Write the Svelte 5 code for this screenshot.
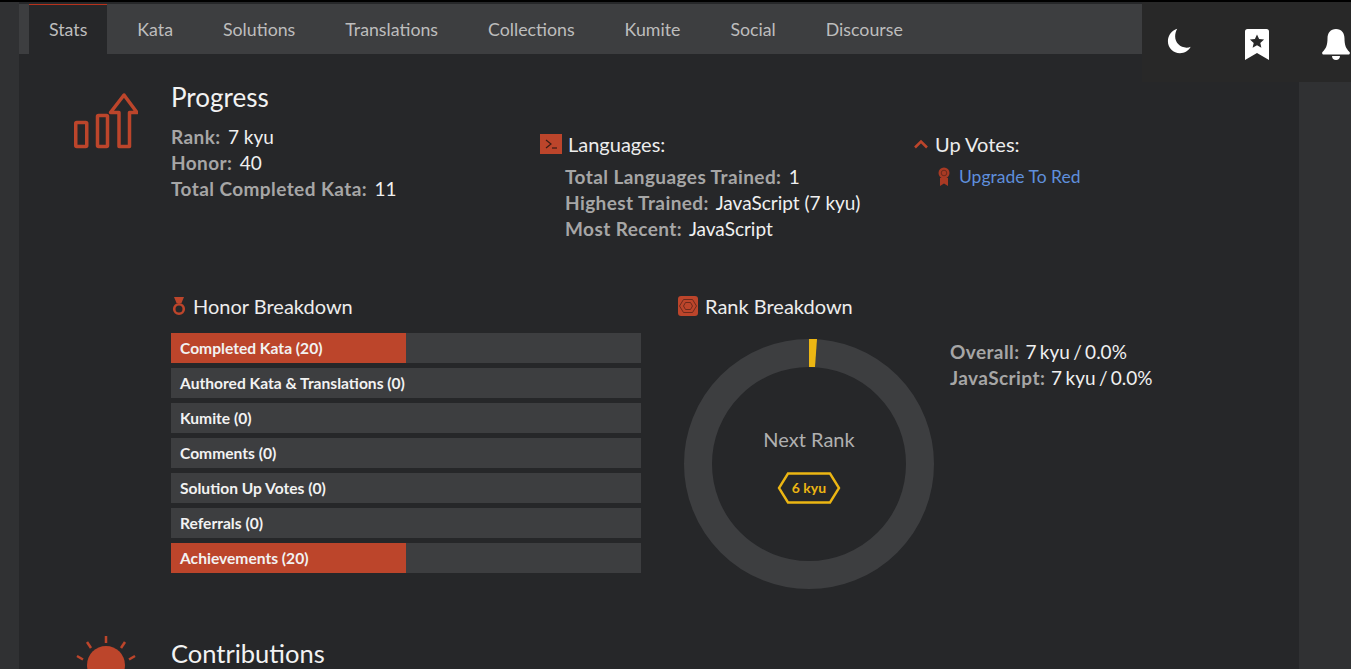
<script>
  const tabs = ["Stats", "Kata", "Solutions", "Translations", "Collections", "Kumite", "Social", "Discourse"];
  const bars = [
    { label: "Completed Kata (20)", pct: 50 },
    { label: "Authored Kata & Translations (0)", pct: 0 },
    { label: "Kumite (0)", pct: 0 },
    { label: "Comments (0)", pct: 0 },
    { label: "Solution Up Votes (0)", pct: 0 },
    { label: "Referrals (0)", pct: 0 },
    { label: "Achievements (20)", pct: 50 }
  ];
</script>

<div class="page">
  <div class="rail"></div>
  <div class="shell">
    <header class="top">
      <div class="top-left">
        <nav class="tabs">
          {#each tabs as tab, i}
            <a class="tab" class:active={i === 0} href="#{tab}">{tab}</a>
          {/each}
        </nav>
      </div>
      <div class="actions">
        <svg class="moon" viewBox="0 0 24 24" width="28" height="28">
          <path d="M10.500 1.500C6 3 2.500 7 2.500 12.200c0 5.800 4.700 10.300 10.300 10.300 4 0 7.400-2.100 9.200-5.500-1 .5-2.200.7-3.500.7-5.500 0-9.800-4.200-9.800-9.500 0-2.500.6-4.700 1.800-6.700z" fill="#fff" />
        </svg>
        <svg class="bookmark" viewBox="0 0 24 32" width="24" height="32">
          <path d="M2.500 0h19A2.500 2.500 0 0 1 24 2.500V31l-12-7-12 7V2.500A2.500 2.500 0 0 1 2.500 0z" fill="#fff" />
          <path d="M12 5.500l2.100 4.600 5 .5-3.800 3.300 1.100 4.900-4.400-2.600-4.400 2.600 1.100-4.900-3.800-3.300 5-.5z" fill="#282828" />
        </svg>
        <svg class="bell" viewBox="0 0 28 32" width="28" height="32">
          <path d="M14 0c5.500 0 8.500 4 8.500 9.500 0 6.500 1.500 10 5 13.500.8.800.3 2.500-1 2.500H1.500c-1.300 0-1.800-1.700-1-2.500 3.500-3.500 5-7 5-13.500C5.500 4 8.500 0 14 0z" fill="#fff" />
          <path d="M10 27h8c0 2.500-1.700 4-4 4s-4-1.500-4-4z" fill="#fff" />
        </svg>
      </div>
    </header>

    <div class="body">
      <main class="main">
        <section class="progress">
          <svg class="big-icon" viewBox="0 0 65 58" width="65" height="58">
            <g fill="none" stroke="#bc452b" stroke-width="3.500" stroke-linejoin="round">
              <rect x="2.750" y="30.500" width="11" height="24" rx="1" />
              <rect x="24.500" y="23.500" width="10" height="31" rx="1" />
              <path d="M46 54.500V20.500h-8.500L51 3l13 17.500h-7.500V54.500z" />
            </g>
          </svg>
          <div class="progress-cols">
            <div class="col-rank">
              <h2>Progress</h2>
              <div class="stat"><b>Rank:</b> 7 kyu</div>
              <div class="stat"><b>Honor:</b> 40</div>
              <div class="stat"><b>Total Completed Kata:</b> 11</div>
            </div>
            <div class="col-lang">
              <h3>
                <svg viewBox="0 0 22 20" width="22" height="20">
                  <rect width="22" height="20" fill="#bc452b" />
                  <path d="M6 6l5 4-5 4" fill="none" stroke="#3a1c14" stroke-width="1.200" />
                  <path d="M12 14h5" stroke="#3a1c14" stroke-width="1.200" />
                </svg>
                Languages:
              </h3>
              <div class="indent">
                <div class="stat"><b>Total Languages Trained:</b> 1</div>
                <div class="stat"><b>Highest Trained:</b> JavaScript (7 kyu)</div>
                <div class="stat"><b>Most Recent:</b> JavaScript</div>
              </div>
            </div>
            <div class="col-votes">
              <h3>
                <svg viewBox="0 0 16 10" width="16" height="10">
                  <path d="M2 8.500l6-6 6 6" fill="none" stroke="#bc452b" stroke-width="2.500" />
                </svg>
                Up Votes:
              </h3>
              <div class="upgrade">
                <svg viewBox="0 0 12 19" width="12" height="19">
                  <circle cx="6" cy="6" r="5.500" fill="#a93a24" />
                  <circle cx="6" cy="6" r="2.800" fill="none" stroke="#6d2a1c" stroke-width="1" />
                  <path d="M2 11h8v8l-4-2.500L2 19z" fill="#a93a24" />
                </svg>
                <a href="#upgrade">Upgrade To Red</a>
              </div>
            </div>
          </div>
        </section>

        <section class="breakdown">
          <div class="honor">
            <h3 class="sub">
              <svg viewBox="0 0 14 20" width="14" height="20">
                <path d="M2 1h10L9.500 7h-5z" fill="#bc452b" />
                <circle cx="7" cy="13" r="4.800" fill="none" stroke="#bc452b" stroke-width="2.600" />
              </svg>
              Honor Breakdown
            </h3>
            <div class="bars">
              {#each bars as bar}
                <div class="bar">
                  <div class="fill" style="width: {bar.pct}%"></div>
                  <span>{bar.label}</span>
                </div>
              {/each}
            </div>
          </div>
          <div class="rank">
            <h3 class="sub">
              <svg viewBox="0 0 20 20" width="20" height="20">
                <rect width="20" height="20" rx="3" fill="#bc452b" />
                <path d="M5.500 3.500h9l4 6.500-4 6.500h-9L1.500 10z" fill="none" stroke="#6d2a1c" stroke-width="1" />
                <path d="M7.500 6.500h5l2 3.500-2 3.500h-5l-2-3.500z" fill="none" stroke="#6d2a1c" stroke-width="1" />
              </svg>
              Rank Breakdown
            </h3>
            <div class="rank-body">
              <div class="donut">
                <svg viewBox="0 0 250 250" width="250" height="250">
                  <circle cx="125" cy="125" r="111" fill="none" stroke="#3d3e40" stroke-width="28" />
                  <path d="M125 0h8l-2 28h-6z" fill="#ecb613" />
                </svg>
                <div class="next">
                  <div class="next-label">Next Rank</div>
                  <div class="kyu">
                    <svg viewBox="0 0 64 32" width="64" height="32">
                      <path d="M11 1.500h42L62 16l-9 14.500H11L2 16z" fill="none" stroke="#ecb613" stroke-width="2.400" />
                    </svg>
                    <span>6 kyu</span>
                  </div>
                </div>
              </div>
              <div class="rank-stats">
                <div class="stat"><b>Overall:</b> 7 kyu / 0.0%</div>
                <div class="stat"><b>JavaScript:</b> 7 kyu / 0.0%</div>
              </div>
            </div>
          </div>
        </section>

        <section class="contrib">
          <svg class="sun" viewBox="0 0 60 34" width="60" height="34">
            <circle cx="30" cy="30" r="19" fill="#bc452b" />
            <g stroke="#bc452b" stroke-width="2.500">
              <path d="M30 1v7" />
              <path d="M11 7l4 6" />
              <path d="M49 7l-4 6" />
              <path d="M1 21l6 3.500" />
              <path d="M59 21l-6 3.500" />
            </g>
          </svg>
          <h2>Contributions</h2>
        </section>
      </main>
      <aside class="side"></aside>
    </div>
  </div>
</div>

<style>
  :global(body) {
    margin: 0;
    background: #262729;
    overflow: hidden;
  }

  .page {
    display: flex;
    height: 667px;
    border-top: 2px solid #000;
    overflow: hidden;
    font-family: Lato, "Open Sans", sans-serif;
    font-size: 19px;
    color: #e6e6e6;
  }

  .rail {
    flex: 0 0 19px;
    background: #303133;
  }

  .shell {
    flex: 1;
    display: flex;
    flex-direction: column;
    min-width: 0;
  }

  .top {
    display: flex;
    flex: 0 0 80px;
    background: #282828;
  }

  .top-left {
    flex: 0 0 1123px;
    padding-top: 2px;
    background: #262729;
  }

  .tabs {
    display: flex;
    height: 50px;
    padding-left: 10px;
    background: #3d3e40;
  }

  .tab {
    display: flex;
    align-items: center;
    padding: 0 20px 2px;
    margin-right: 10px;
    border-top: 1px solid transparent;
    color: #bdbdbd;
    font-size: 17.750px;
    text-decoration: none;
  }

  .tab.active {
    border-top-color: #b8321c;
    background: #262729;
  }

  .actions {
    flex: 1;
    display: flex;
    padding: 27px 0 0 23px;
    align-items: flex-start;
    background: #282828;
  }

  .moon {
    flex-shrink: 0;
    margin-top: -2px;
  }

  .bookmark {
    flex-shrink: 0;
    margin-left: 52px;
  }

  .bell {
    flex-shrink: 0;
    margin-left: 53px;
  }

  .body {
    flex: 1;
    display: flex;
    min-height: 0;
  }

  .main {
    flex: 1;
    min-width: 0;
    background: #262729;
  }

  .side {
    flex: 0 0 52px;
    background: #303133;
  }

  h2 {
    margin: 0;
    font-size: 26px;
    font-weight: 400;
    line-height: 30px;
    color: #f2f2f2;
  }

  h3 {
    display: flex;
    align-items: center;
    gap: 6px;
    margin: 0;
    font-size: 20px;
    font-weight: 400;
    line-height: 26px;
    color: #ededed;
  }

  .progress {
    display: flex;
    padding: 0 0 0 54px;
  }

  .big-icon {
    flex: 0 0 65px;
    margin-top: 10px;
  }

  .progress-cols {
    display: grid;
    grid-template-columns: 369px 373px 1fr;
    margin-left: 33px;
  }

  .col-rank h2 {
    margin-bottom: 12px;
  }

  .col-lang, .col-votes {
    padding-top: 49px;
  }

  .stat {
    line-height: 26px;
    color: #f0f0f0;
    white-space: nowrap;
  }

  .stat b {
    margin-right: 2.500px;
    font-weight: 700;
    letter-spacing: .42px;
    color: #a6a6a6;
  }

  .indent {
    margin: 7px 0 0 25px;
  }

  .upgrade {
    display: flex;
    align-items: center;
    gap: 9px;
    margin: 9px 0 0 25px;
    font-size: 17.500px;
  }

  .upgrade a {
    color: #5f8fdc;
    text-decoration: none;
  }

  .breakdown {
    display: flex;
    margin: 51px 0 0 152px;
  }

  .honor {
    flex: 0 0 470px;
  }

  .sub {
    margin-bottom: 14px;
    padding-left: 1px;
    gap: 7px;
  }

  .bars {
    display: flex;
    flex-direction: column;
    gap: 5px;
  }

  .bar {
    position: relative;
    height: 30px;
    background: #3d3e40;
  }

  .fill {
    position: absolute;
    inset: 0 auto 0 0;
    background: #bc452b;
  }

  .bar span {
    position: relative;
    display: block;
    padding-left: 9px;
    font-size: 15.600px;
    font-weight: 700;
    line-height: 30px;
    color: #f2f2f2;
  }

  .rank {
    margin-left: 37px;
    flex: 1;
  }

  .rank .sub {
    margin-bottom: 20px;
    padding: 0;
  }

  .rank-body {
    display: flex;
    padding-left: 6px;
  }

  .donut {
    position: relative;
    flex: 0 0 250px;
    height: 250px;
  }

  .next {
    position: absolute;
    inset: 0;
    display: flex;
    flex-direction: column;
    align-items: center;
    padding-top: 87px;
  }

  .next-label {
    font-size: 20px;
    line-height: 26px;
    color: #b0b0b0;
  }

  .kyu {
    position: relative;
    width: 64px;
    height: 32px;
    margin-top: 20px;
  }

  .kyu span {
    position: absolute;
    inset: 0;
    text-align: center;
    font-size: 14px;
    font-weight: 700;
    line-height: 32px;
    color: #ecb613;
  }

  .rank-stats {
    margin: 0 0 0 16px;
    word-spacing: -1.500px;
  }

  .contrib {
    display: flex;
    align-items: flex-start;
    margin: 44px 0 0 57px;
  }

  .sun {
    flex: 0 0 60px;
    margin-top: 2px;
  }

  .contrib h2 {
    margin: 5px 0 0 35px;
    font-size: 25.500px;
  }
</style>
